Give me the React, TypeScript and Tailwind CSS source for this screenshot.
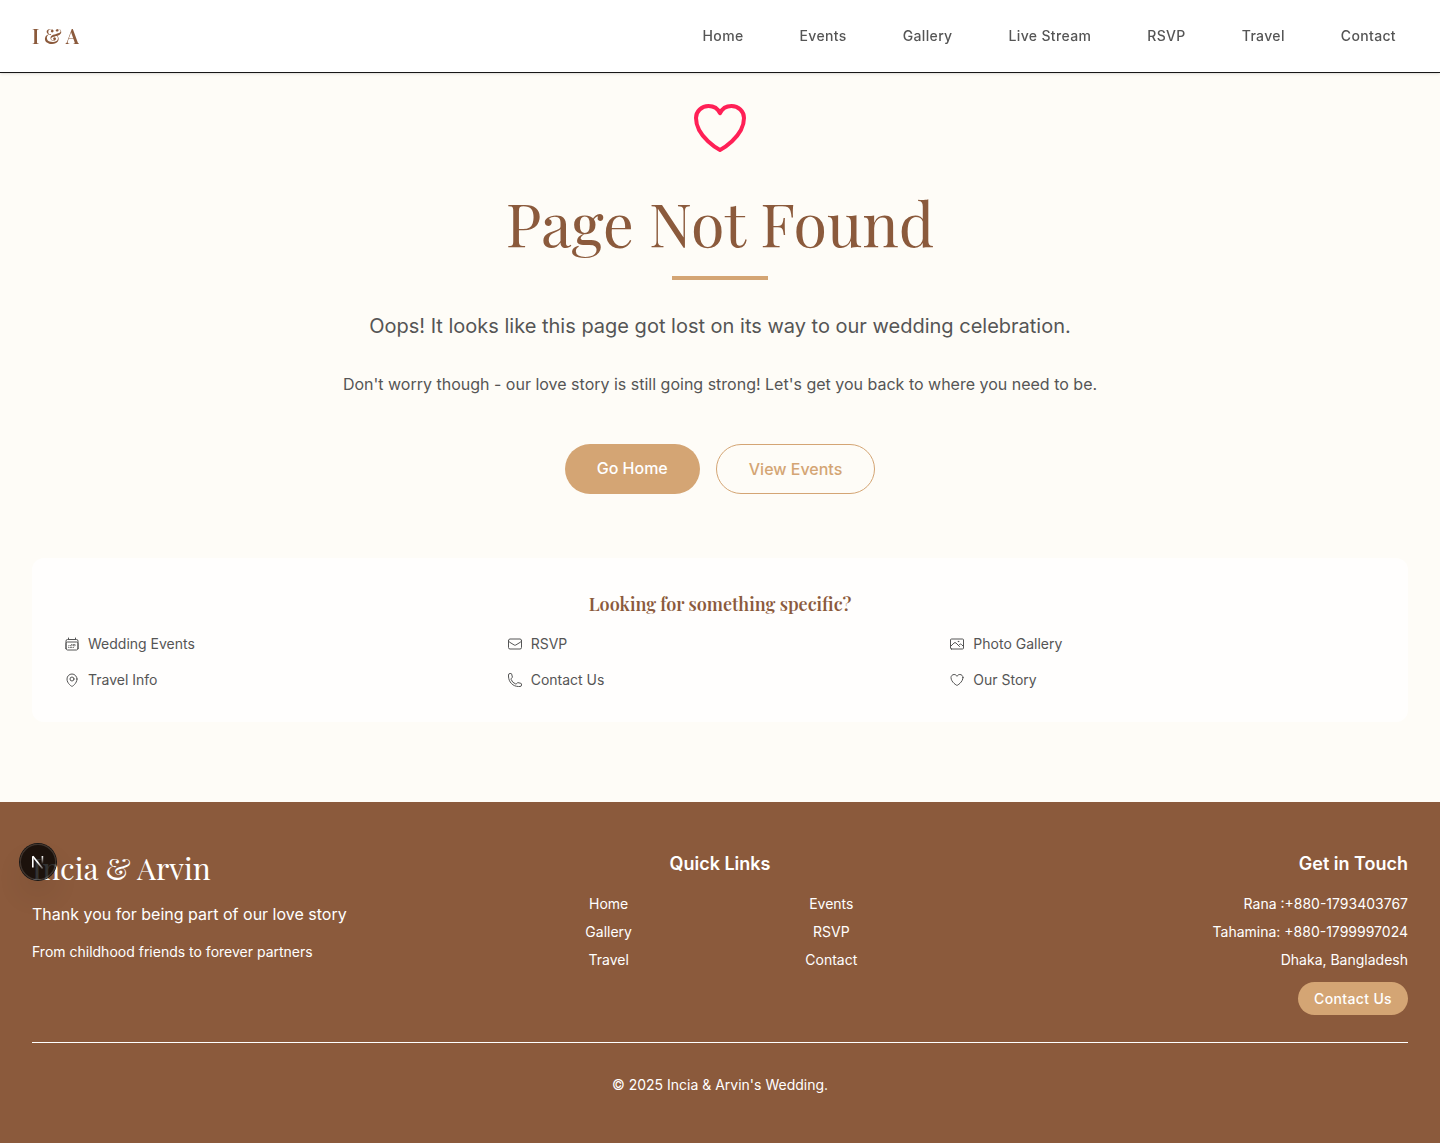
import type { ComponentType } from "react";
import {
  HiOutlineCalendarDays,
  HiOutlineEnvelope,
  HiOutlineHeart,
  HiOutlineMapPin,
  HiOutlinePhone,
  HiOutlinePhoto,
} from "react-icons/hi2";

const navLinks = ["Home", "Events", "Gallery", "Live Stream", "RSVP", "Travel", "Contact"];

const footerLinks = ["Home", "Events", "Gallery", "RSVP", "Travel", "Contact"];

const contactLines = ["Rana :+880-1793403767", "Tahamina: +880-1799997024", "Dhaka, Bangladesh"];

const suggestions: { label: string; Icon: ComponentType<{ className?: string }> }[] = [
  { label: "Wedding Events", Icon: HiOutlineCalendarDays },
  { label: "RSVP", Icon: HiOutlineEnvelope },
  { label: "Photo Gallery", Icon: HiOutlinePhoto },
  { label: "Travel Info", Icon: HiOutlineMapPin },
  { label: "Contact Us", Icon: HiOutlinePhone },
  { label: "Our Story", Icon: HiOutlineHeart },
];

function Header() {
  return (
    <header className="fixed inset-x-0 top-0 z-10 border-b border-[#171717] bg-white shadow-sm">
      <div className="flex h-18 items-center justify-between px-8">
        <a href="#" className="font-['Playfair_Display',serif] text-xl font-semibold text-[#8b5a3c]">
          I &amp; A
        </a>
        <nav className="flex gap-8">
          {navLinks.map((label) => (
            <a key={label} href="#" className="px-3 py-2 text-sm font-medium tracking-wide text-[#555555]">
              {label}
            </a>
          ))}
        </nav>
      </div>
    </header>
  );
}

function Hero() {
  return (
    <section className="flex flex-col items-center text-center text-[#555555]">
      <HiOutlineHeart className="size-16 text-[#ff2056]" />
      <h1 className="mt-6 font-['Playfair_Display',serif] text-[61px] leading-[76px] text-[#8b5a3c]">
        Page Not Found
      </h1>
      <div className="mt-4 h-1 w-24 bg-[#d4a574]" />
      <p className="mt-8 text-xl leading-7">
        Oops! It looks like this page got lost on its way to our wedding celebration.
      </p>
      <p className="mt-8 text-base">
        Don't worry though - our love story is still going strong! Let's get you back to where you need to be.
      </p>
      <div className="mt-12 flex gap-4">
        <a href="#" className="rounded-full bg-[#d4a574] px-8 py-3 font-medium text-white">
          Go Home
        </a>
        <a href="#" className="rounded-full border border-[#d4a574] px-8 py-3 font-medium text-[#d4a574]">
          View Events
        </a>
      </div>
    </section>
  );
}

function Suggestions() {
  return (
    <section className="mt-16 rounded-xl bg-white/80 p-8">
      <h2 className="text-center font-['Playfair_Display',serif] text-lg font-semibold text-[#8b5a3c]">
        Looking for something specific?
      </h2>
      <ul className="mt-4 grid grid-cols-3 gap-4 text-sm text-[#555555]">
        {suggestions.map(({ label, Icon }) => (
          <li key={label}>
            <a href="#" className="flex items-center gap-2">
              <Icon className="size-4" />
              {label}
            </a>
          </li>
        ))}
      </ul>
    </section>
  );
}

function Footer() {
  return (
    <footer className="relative grow bg-[#8b5a3c] px-8 py-12 text-white">
      <div className="grid grid-cols-3 gap-8">
        <div>
          <h3 className="font-['Playfair_Display',serif] text-3xl">Incia &amp; Arvin</h3>
          <p className="mt-4">Thank you for being part of our love story</p>
          <p className="mt-4 text-sm">From childhood friends to forever partners</p>
        </div>
        <div className="text-center">
          <h4 className="text-lg font-semibold">Quick Links</h4>
          <ul className="mt-4 grid grid-cols-2 gap-2 text-sm">
            {footerLinks.map((label) => (
              <li key={label}>
                <a href="#">{label}</a>
              </li>
            ))}
          </ul>
        </div>
        <div className="text-right">
          <h4 className="text-lg font-semibold">Get in Touch</h4>
          <div className="mt-4 flex flex-col items-end gap-2 text-sm">
            {contactLines.map((line) => (
              <p key={line}>{line}</p>
            ))}
            <a href="#" className="mt-1 rounded-full bg-[#d4a574] px-4 py-2 leading-[17px] font-medium tracking-wide">
              Contact Us
            </a>
          </div>
        </div>
      </div>
      <div className="mt-[27px] border-t border-white pt-8 text-center text-sm">
        <p>© 2025 Incia &amp; Arvin's Wedding.</p>
      </div>
      <DevToolsButton />
    </footer>
  );
}

/* Floating developer-tools button that overlaps the footer's left edge. */
function DevToolsButton() {
  return (
    <button
      type="button"
      aria-label="Open developer tools"
      className="absolute top-[42px] left-5 flex size-9 items-center justify-center rounded-full bg-black/80 shadow-[0_0_0_1px_#171717,inset_0_0_0_1px_rgba(255,255,255,0.14),0_16px_32px_-8px_rgba(0,0,0,0.24)]"
    >
      <svg viewBox="0 0 14 14" className="size-3.5" fill="none">
        <defs>
          <linearGradient id="stem" x1="11" y1="1" x2="11" y2="9" gradientUnits="userSpaceOnUse">
            <stop stopColor="white" />
            <stop offset="1" stopColor="white" stopOpacity="0" />
          </linearGradient>
          <linearGradient id="diagonal" x1="7" y1="7" x2="12" y2="13" gradientUnits="userSpaceOnUse">
            <stop stopColor="white" />
            <stop offset="1" stopColor="white" stopOpacity="0.3" />
          </linearGradient>
        </defs>
        <path d="M1.8 12.5V1.2" stroke="white" strokeWidth="1.6" />
        <path d="M1.8 1.2L11.6 13.4" stroke="url(#diagonal)" strokeWidth="1.6" />
        <path d="M11.4 1V9" stroke="url(#stem)" strokeWidth="1.6" />
      </svg>
    </button>
  );
}

export default function App() {
  return (
    <div className="flex min-h-screen flex-col bg-[#fefcf7] font-['Inter',sans-serif]">
      <Header />
      <main className="px-8 pt-24 pb-20">
        <Hero />
        <Suggestions />
      </main>
      <Footer />
    </div>
  );
}
